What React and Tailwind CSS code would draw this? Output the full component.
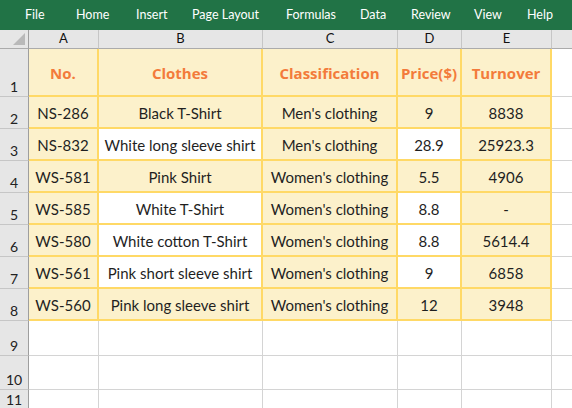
const menu = [
  ["File", "w-[51px]"],
  ["Home", "w-[60px]"],
  ["Insert", "w-[56px]"],
  ["Page Layout", "w-[94px]"],
  ["Formulas", "w-[74px]"],
  ["Data", "w-[51px]"],
  ["Review", "w-[63px]"],
  ["View", "w-[53px]"],
  ["Help", "w-[40px]"],
];

const cols = ["A", "B", "C", "D", "E", ""];

const headers = ["No.", "Clothes", "Classification", "Price($)", "Turnover"];

const rows = [
  ["NS-286", "Black T-Shirt", "Men's clothing", "9", "8838"],
  ["NS-832", "White long sleeve shirt", "Men's clothing", "28.9", "25923.3"],
  ["WS-581", "Pink Shirt", "Women's clothing", "5.5", "4906"],
  ["WS-585", "White T-Shirt", "Women's clothing", "8.8", "-"],
  ["WS-580", "White cotton T-Shirt", "Women's clothing", "8.8", "5614.4"],
  ["WS-561", "Pink short sleeve shirt", "Women's clothing", "9", "6858"],
  ["WS-560", "Pink long sleeve shirt", "Women's clothing", "12", "3948"],
];

// rows (by index in `rows`) where columns B and D are left white
const whiteRows = [1, 3, 4, 5];

function RowHead({ n }) {
  return (
    <div className="flex items-end justify-center border-r border-b border-r-[#9e9e9e] border-b-[#c6c6c6] bg-[#e6e6e6] pb-[2px] text-[14px] leading-none text-[#222]">
      {n}
    </div>
  );
}

function EmptyCell({ last }) {
  return (
    <div
      className={
        last
          ? "border-b border-[#d4d4d4] bg-white"
          : "border-r border-b border-[#d4d4d4] bg-white"
      }
    />
  );
}

export default function App() {
  return (
    <div
      className="h-[408px] w-[572px] overflow-hidden bg-white"
      style={{ fontFamily: "Lato, 'Noto Sans', sans-serif" }}
    >
      <div className="flex h-[30px] items-center bg-[#217346] pl-[25px] text-[12.5px] text-white">
        {menu.map(([label, w]) => (
          <div key={label} className={`${w} shrink-0 whitespace-nowrap`}>
            {label}
          </div>
        ))}
      </div>

      <div className="grid grid-cols-[29px_70px_164px_135px_64px_90px_1fr] grid-rows-[19px_48px_repeat(7,32px)_35px_34px_20px]">
        {/* column headers */}
        <div className="relative border-r border-b border-r-[#9e9e9e] border-b-[#ababab] bg-[#e6e6e6]">
          <svg
            className="absolute right-[3px] bottom-[3px]"
            width="12"
            height="12"
            viewBox="0 0 12 12"
          >
            <polygon points="12,0 12,12 0,12" fill="#b9b9b9" />
          </svg>
        </div>
        {cols.map((c, i) => (
          <div
            key={i}
            className={`flex items-center justify-center border-b border-b-[#ababab] bg-[#e6e6e6] text-[13px] text-[#111] ${
              i < cols.length - 1 ? "border-r border-r-[#c6c6c6]" : ""
            }`}
          >
            {c}
          </div>
        ))}

        {/* header row */}
        <RowHead n={1} />
        {headers.map((h) => (
          <div
            key={h}
            className="flex items-center justify-center whitespace-nowrap border-r-2 border-b-2 border-[#ffd966] bg-[#fcf1cb] pt-[3px] text-[15px] font-bold text-[#f37b3b]"
            style={{ fontFamily: "'Open Sans', 'Noto Sans', sans-serif" }}
          >
            {h}
          </div>
        ))}
        <EmptyCell last />

        {/* data rows */}
        {rows.map((r, ri) => (
          <div key={ri} className="contents">
            <RowHead n={ri + 2} />
            {r.map((v, ci) => {
              const white = whiteRows.includes(ri) && (ci === 1 || ci === 3);
              return (
                <div
                  key={ci}
                  className={`flex items-center justify-center whitespace-nowrap border-r-2 border-b-2 border-[#ffd966] pt-[3px] text-[15px] text-[#1f1f1f] ${
                    white ? "bg-white" : "bg-[#fcf1cb]"
                  }`}
                >
                  {v}
                </div>
              );
            })}
            <EmptyCell last />
          </div>
        ))}

        {/* empty rows */}
        {[9, 10, 11].map((n) => (
          <div key={n} className="contents">
            <RowHead n={n} />
            {[0, 1, 2, 3, 4, 5].map((c) => (
              <EmptyCell key={c} last={c === 5} />
            ))}
          </div>
        ))}
      </div>
    </div>
  );
}
